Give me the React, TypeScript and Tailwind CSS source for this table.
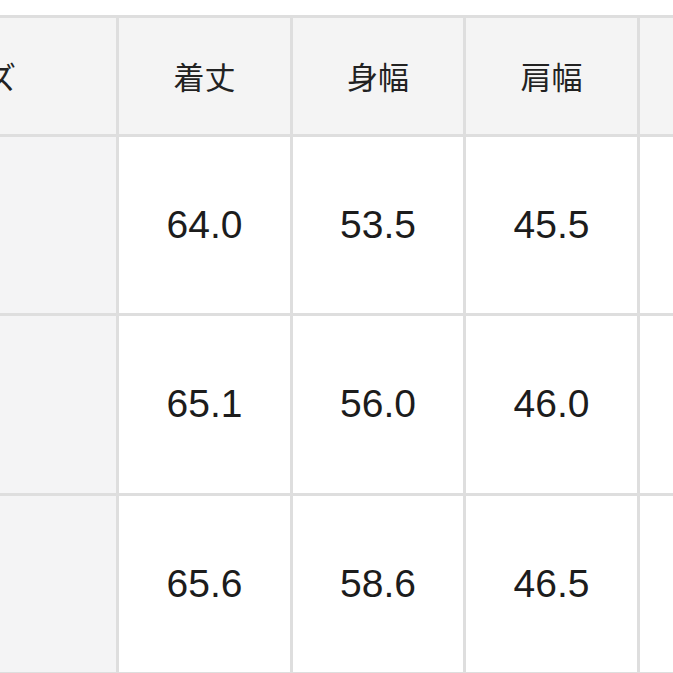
// ─── Data ─────────────────────────────────────────────────────────────────────

const COLUMNS = ["サイズ", "着丈", "身幅", "肩幅", "袖丈"];

const ROWS: string[][] = [
  ["S", "64.0", "53.5", "45.5", "22.0"],
  ["M", "65.1", "56.0", "46.0", "22.5"],
  ["L", "65.6", "58.6", "46.5", "23.0"],
];

// ─── App ──────────────────────────────────────────────────────────────────────

export default function App() {
  return (
    <div className="h-[673px] w-[673px] overflow-hidden bg-white pt-[15px]">
      <div
        className="ml-[-179px] grid w-max gap-[3px] bg-[#dedede] p-[3px]"
        style={{ gridTemplateColumns: "292px 171px 170px 171px 171px" }}
      >
        {COLUMNS.map((col) => (
          <div
            key={col}
            className="flex h-[116px] items-center justify-center bg-[#f4f4f4] text-[31px] text-[#222] [font-family:'Noto_Sans_CJK_JP',sans-serif]"
          >
            {col}
          </div>
        ))}

        {ROWS.map((row, r) =>
          row.map((cell, c) => (
            <div
              key={`${r}-${c}`}
              className={[
                "flex items-center justify-center",
                r === 1 ? "h-[177px]" : "h-[176px]",
                "text-[39px] text-[#1c1c1c] [font-family:'Liberation_Sans',Arial,sans-serif]",
                c === 0 ? "bg-[#f4f4f5]" : "bg-white",
              ].join(" ")}
            >
              {cell}
            </div>
          )),
        )}
      </div>
    </div>
  );
}
